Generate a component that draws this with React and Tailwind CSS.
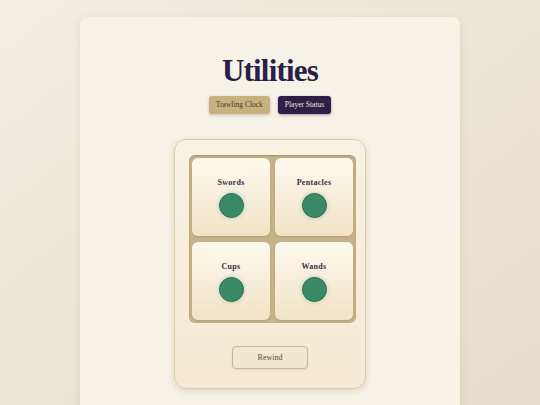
const tiles = ["Swords", "Pentacles", "Cups", "Wands"];

const serif = { fontFamily: '"Liberation Serif", "DejaVu Serif", serif' };

const Tile = ({ name }) => (
  <div className="flex h-[78px] flex-col items-center rounded-md bg-gradient-to-b from-[#fdf9ee] to-[#f1e4c6] pt-[20px] shadow-[0_1px_2px_rgba(120,95,50,0.25)]">
    <span className="text-[8px] font-bold leading-[10px] tracking-[0.3px] text-[#3a2e45]">
      {name}
    </span>
    <span className="mt-[5px] h-[25px] w-[25px] rounded-full border border-[#2f6f53] bg-[#3b8a67] shadow-[0_0_4px_rgba(59,138,103,0.35)]" />
  </div>
);

const App = () => {
  return (
    <div
      className="min-h-[405px] overflow-hidden bg-gradient-to-br from-[#f3efe6] via-[#ebe5d6] to-[#e6dccb] pt-[17px]"
      style={serif}
    >
      <div className="mx-auto h-[400px] w-[380px] rounded-lg bg-[#f6f2e7] pt-[34px] shadow-[0_2px_8px_rgba(120,100,60,0.12)]">
        <h1 className="text-center text-[31px] font-bold leading-[40px] tracking-[-0.8px] text-[#2a1f48]">
          Utilities
        </h1>

        <div className="mt-[5px] flex justify-center gap-[8px]">
          <button className="h-[18px] rounded-[3px] bg-[#c7b17e] px-[7px] text-[7.5px] text-[#4a3b2c] shadow-[0_1px_3px_rgba(120,95,50,0.35)]">
            Trawling Clock
          </button>
          <button className="h-[18px] rounded-[3px] bg-[#2d1f48] px-[7px] text-[7.5px] text-[#efe6d3] shadow-[0_1px_3px_rgba(40,25,70,0.4)]">
            Player Status
          </button>
        </div>

        <div className="mx-auto mt-[25px] flex w-[192px] flex-col items-center rounded-xl border border-[#dccda8] bg-gradient-to-b from-[#f8f2e2] to-[#f4ead3] pb-[19px] pt-[15px] shadow-[0_2px_6px_rgba(120,95,50,0.18)]">
          <div className="ml-[14px] grid w-[167px] grid-cols-2 gap-x-[5px] gap-y-[6px] self-start rounded-md bg-[#c6b389] p-[3px] shadow-[inset_0_1px_2px_rgba(90,70,30,0.3)]">
            {tiles.map((t) => (
              <Tile key={t} name={t} />
            ))}
          </div>

          <button className="mt-[23px] h-[23px] w-[76px] rounded-[4px] border border-[#c9b894] bg-[#f1e8d0] text-[8px] text-[#5a4b3c] shadow-[0_1px_2px_rgba(120,95,50,0.15)]">
            Rewind
          </button>
        </div>
      </div>
    </div>
  );
};

export default App;
